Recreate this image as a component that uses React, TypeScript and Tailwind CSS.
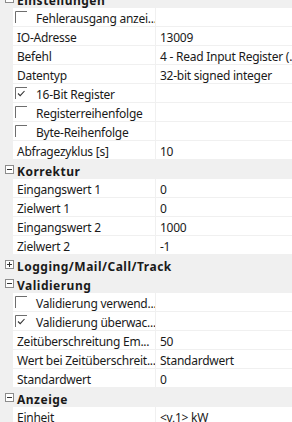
import React from "react";

type Row =
  | { kind: "cat"; label: string; open: boolean }
  | { kind: "prop"; label: string; value?: string }
  | { kind: "check"; label: string; checked: boolean };

const ROWS: Row[] = [
  { kind: "cat", label: "Einstellungen", open: true },
  { kind: "check", label: "Fehlerausgang anzei...", checked: false },
  { kind: "prop", label: "IO-Adresse", value: "13009" },
  { kind: "prop", label: "Befehl", value: "4 - Read Input Register (..." },
  { kind: "prop", label: "Datentyp", value: "32-bit signed integer" },
  { kind: "check", label: "16-Bit Register", checked: true },
  { kind: "check", label: "Registerreihenfolge", checked: false },
  { kind: "check", label: "Byte-Reihenfolge", checked: false },
  { kind: "prop", label: "Abfragezyklus [s]", value: "10" },
  { kind: "cat", label: "Korrektur", open: true },
  { kind: "prop", label: "Eingangswert 1", value: "0" },
  { kind: "prop", label: "Zielwert 1", value: "0" },
  { kind: "prop", label: "Eingangswert 2", value: "1000" },
  { kind: "prop", label: "Zielwert 2", value: "-1" },
  { kind: "cat", label: "Logging/Mail/Call/Track", open: false },
  { kind: "cat", label: "Validierung", open: true },
  { kind: "check", label: "Validierung verwend...", checked: false },
  { kind: "check", label: "Validierung überwac...", checked: true },
  { kind: "prop", label: "Zeitüberschreitung Em...", value: "50" },
  { kind: "prop", label: "Wert bei Zeitüberschreit...", value: "Standardwert" },
  { kind: "prop", label: "Standardwert", value: "0" },
  { kind: "cat", label: "Anzeige", open: true },
  { kind: "prop", label: "Einheit", value: "<v,1> kW" },
];

function Toggle({ open }: { open: boolean }) {
  return (
    <svg width="9" height="9" viewBox="0 0 9 9" className="block">
      <rect x="0.5" y="0.5" width="8" height="8" fill="#fff" stroke="#8c8c8c" />
      <path d="M2 4.5h5" stroke="#333" />
      {!open && <path d="M4.5 2v5" stroke="#333" />}
    </svg>
  );
}

function Box({ checked }: { checked: boolean }) {
  return (
    <svg width="12" height="12" viewBox="0 0 12 12" className="block">
      <path d="M0.5 12V0.5H12" fill="none" stroke="#6e6e6e" />
      {checked && <path d="M3 6.5l2.2 2.2L9.5 4" fill="none" stroke="#333" strokeWidth="1.1" />}
    </svg>
  );
}

export default function App() {
  return (
    <div
      className="h-[422px] w-[292px] overflow-hidden bg-[#f0f0f0] text-[12px] leading-none tracking-[-0.25px] text-[#1a1a1a]"
      style={{ fontFamily: '"Segoe UI", "Noto Sans", sans-serif' }}
    >
      <div className="-mt-[11px]">
        {ROWS.map((r, i) => {
          if (r.kind === "cat") {
            return (
              <div key={i} className="flex h-[19px] items-center bg-[#f0f0f0]">
                <div className="flex w-[17px] justify-center pl-[2px]">
                  <Toggle open={r.open} />
                </div>
                <span className="translate-y-[2px] whitespace-nowrap font-bold tracking-[0.5px]">{r.label}</span>
              </div>
            );
          }
          return (
            <div key={i} className="flex h-[19px]">
              <div className="w-[13px] shrink-0 bg-[#f0f0f0]" />
              <div className="flex min-w-0 flex-1 border-b border-[#f0f0f0] bg-white">
                <div className="flex w-[143px] shrink-0 items-center overflow-hidden whitespace-nowrap border-r border-[#f0f0f0]">
                  {r.kind === "check" ? (
                    <>
                      <div className="ml-[2px] mr-[9px]">
                        <Box checked={r.checked} />
                      </div>
                      <span className="translate-y-[2px]">{r.label}</span>
                    </>
                  ) : (
                    <span className="translate-y-[2px] pl-[4px]">{r.label}</span>
                  )}
                </div>
                <div className="flex min-w-0 flex-1 items-center overflow-hidden whitespace-nowrap pl-[4px]">
                  <span className="translate-y-[2px]">{r.kind === "prop" ? r.value : ""}</span>
                </div>
              </div>
            </div>
          );
        })}
      </div>
    </div>
  );
}
